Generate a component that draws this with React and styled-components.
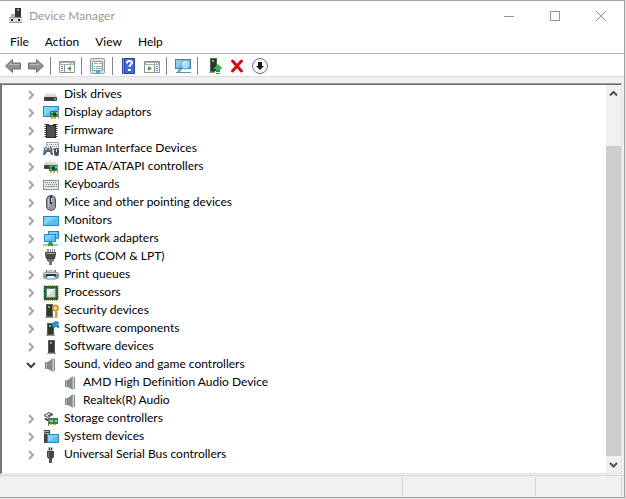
import React, { useState } from "react";
import styled, { createGlobalStyle } from "styled-components";

const GlobalStyle = createGlobalStyle`
  * { box-sizing: border-box; }
  body { margin: 0; background: #e4e4e4; }
  button { font: inherit; color: inherit; background: none; border: 0; padding: 0; }
  ul { list-style: none; margin: 0; padding: 0; }
`;

const Window = styled.div`
  display: flex;
  flex-direction: column;
  height: calc(100vh - 1px);
  min-height: 240px;
  margin-right: 1px;
  border: solid #a3a3a3;
  border-width: 1px 1px 1px 0;
  background: #fff;
  color: #000;
  font: 12px/16px Lato, "Open Sans", sans-serif;
  font-variant-ligatures: none;
`;

const TitleBar = styled.header`
  display: flex;
  align-items: center;
  flex: none;
  height: 29px;
  padding-left: 8px;
  gap: 5px;
  color: #999;
`;

const Title = styled.h1`
  flex: 1;
  margin: 0;
  font-size: 12px;
  font-weight: 400;
`;

const CaptionButton = styled.button`
  display: grid;
  place-items: center;
  width: 46px;
  height: 29px;
`;

const CaptionGroup = styled.div`
  display: flex;
`;

const MenuBar = styled.nav`
  display: flex;
  flex: none;
  height: 24px;
  padding: 0 2px;
  border-bottom: 1px solid #b2b4bb;
`;

const MenuItem = styled.button`
  padding: 0 8px;
`;

const Toolbar = styled.div`
  display: flex;
  align-items: center;
  flex: none;
  height: 23px;
  padding-left: 2px;
  border-bottom: 1px solid #dcdcdc;
`;

const ToolButton = styled.button`
  display: grid;
  align-content: center;
  width: 23px;
  height: 22px;
  padding: 2px 0 0 3px;
`;

const ToolSeparator = styled.span`
  width: 1px;
  height: 18px;
  margin: 2px 5px 0 2px;
  background: #858585;
`;

const Body = styled.main`
  display: flex;
  flex: 1;
  min-height: 0;
  padding: 6px 2px 1px 0;
  background: #f0f0f0;
`;

const Pane = styled.section`
  display: flex;
  flex: 1;
  min-width: 0;
  border: 1px solid #a0a0a0;
  border-right-color: #e3e3e3;
  border-bottom-color: #e3e3e3;
  border-left: 2px solid #777;
  background: #fff;
  box-shadow: inset 0 1px #696969;
`;

const Tree = styled.ul`
  flex: 1;
  min-width: 0;
  overflow: hidden;
  && { padding: 2px 0 0 21px; }
`;

const Row = styled.div`
  display: flex;
  align-items: center;
  height: 18px;
  padding-left: ${(p) => (p.$child ? "40px" : "0")};
`;

const Expander = styled.button`
  display: grid;
  place-items: center;
  width: 16px;
  height: 18px;
  margin-right: 4px;
`;

const Label = styled.span`
  align-self: flex-start;
  margin-left: 5px;
  white-space: nowrap;
`;

const ChildLabel = styled(Label)`
  margin-left: 4px;
`;

const ScrollBar = styled.div`
  display: flex;
  flex-direction: column;
  width: 15px;
  margin-top: 1px;
  background: #f0f0f0;
`;

const ScrollButton = styled.button`
  display: grid;
  place-items: center;
  flex: none;
  height: 17px;
`;

const TrackSpace = styled.div`
  flex: 44;
`;

const Thumb = styled.div`
  flex: 310;
  background: #cdcdcd;
`;

const StatusBar = styled.footer`
  display: flex;
  flex: none;
  height: 22px;
  padding: 1px 2px 1px 0;
  border-top: 1px solid #d5d5d5;
  background: #f0f0f0;
`;

const StatusCell = styled.div`
  flex: ${(p) => p.$grow};
  border-right: 1px solid #d4d4d4;
`;

const Svg = styled.svg`
  display: block;
  flex: none;
`;

const Icon = ({ size = 16, children }) => (
  <Svg width={size} height={size} viewBox={`0 0 ${size} ${size}`} aria-hidden="true">
    {children}
  </Svg>
);

const Monitor = ({ x = 0, y = 2, w = 16, h = 11 }) => (
  <g>
    <rect x={x} y={y} width={w} height={h} fill="#2b88bd" />
    <rect x={x + 1} y={y + 1} width={w - 2} height={h - 2} fill="#57bdf5" />
    <path d={`M${x + 1} ${y + 1}h${w - 2}L${x + 1} ${y + h - 1}z`} fill="#7ed2ff" />
  </g>
);

const Board = ({ x, y }) => (
  <g>
    <rect x={x} y={y} width="9" height="6" fill="#2a8058" />
    <path d={`M${x + 1} ${y + 1}h2v1h-2zM${x + 6} ${y + 1}h2v2h-2zM${x + 1} ${y + 4}h2v1h-2z`} fill="#75c596" />
    <rect x={x + 3} y={y + 2} width="3" height="3" fill="#174a33" />
    <path d={`M${x + 1} ${y + 6}h2v2h-2zm3 0h2v2h-2z`} fill="#f2a51e" />
    <rect x={x + 8} y={y - 1} width="1" height="9" fill="#9aa39e" />
  </g>
);

const Tower = ({ x = 4, y = 1, h = 14 }) => (
  <g>
    <rect x={x} y={y} width="7" height={h} fill="#5a5a5a" />
    <rect x={x + 1} y={y + 1} width="5" height={h - 3} fill="#343434" />
    <rect x={x + 2} y={y + 2} width="2" height="2" fill="#20ef31" />
    <rect x={x - 1} y={y + h - 1} width="9" height="1" fill="#999" />
  </g>
);

const Disk = ({ y = 6 }) => (
  <g>
    <path d={`M3 ${y}h9l2 4H1z`} fill="#d3d5d6" />
    <path d={`M3 ${y}h9l1 2H2z`} fill="#e6e7e7" />
    <rect x="1" y={y + 4} width="13" height="4" rx="1" fill="#3c3e3f" />
    <rect x="11" y={y + 5} width="2" height="2" fill="#21d542" />
  </g>
);

const Speaker = () => (
  <g>
    <path d="M2 5h3v7H2z" fill="#7b848b" />
    <path d="M3 5h1v7H3z" fill="#b6bcc1" />
    <path d="M5 5 10 1v14l-5-3z" fill="#a4a9ad" />
    <path d="M5 5 9 2v12l-4-2z" fill="#858c91" />
    <path d="M10 1h1v14h-1z" fill="#ced2d5" />
    <path d="M11 2h1v12h-1z" fill="#858b90" />
  </g>
);

const icons = {
  disk: <Disk />,
  display: (
    <>
      <Monitor y={1} h={11} />
      <Board x={7} y={6} />
    </>
  ),
  firmware: (
    <>
      <path d="M2.5 1v14M13.5 1v14" stroke="#333" strokeDasharray="1 1" />
      <path d="M1.5 1v14M14.5 1v14" stroke="#aaa" strokeDasharray="1 1" />
      <path d="M3 1h3v1h4V1h3v14H3z" fill="#2b2b2b" />
      <path d="M4 2h1v1h6V2h1v12H4z" fill="#505050" />
    </>
  ),
  hid: (
    <>
      <path d="M3 1h13v8H3z" fill="#a4acb2" />
      <path d="M4 2h11v6H4z" fill="#eceeef" />
      <path d="M4 3.5h11M5 5.5h10M4 7.5h11" stroke="#8a949c" strokeDasharray="1 1" />
      <path d="M1 7q2-2 3 0h2q2-2 3 0l1 7H8l-1-3H4l-2 3H0z" fill="#4f6b83" />
      <path d="M2 7h2v2H2z" fill="#9fc4e2" />
      <path d="M6 7h2v2H6z" fill="#ef8733" />
      <rect x="11" y="7" width="5" height="8" rx="2" fill="#4c535a" />
      <path d="M13 8h1v3h-1z" fill="#d9dfe3" />
    </>
  ),
  ide: (
    <>
      <Disk y={2} />
      <Board x={6} y={6} />
    </>
  ),
  keyboard: (
    <>
      <rect x="0" y="3" width="16" height="10" fill="#8d9498" />
      <rect x="1" y="4" width="14" height="8" fill="#e4e7e9" />
      <path d="M2 5.5h12M2 9.5h1M13 9.5h1" stroke="#798289" strokeDasharray="1 1" />
      <path d="M3 7.5h11" stroke="#798289" strokeDasharray="1 1" />
      <path d="M4 9.5h8" stroke="#8d969c" />
    </>
  ),
  mouse: (
    <>
      <rect x="3" y="0" width="10" height="16" rx="5" fill="#4b5056" />
      <rect x="4" y="1" width="8" height="14" rx="4" fill="#929ba5" />
      <path d="M5 4h1v8H5z" fill="#c2c8ce" />
      <path d="M7 1h2v8H7z" fill="#30363c" />
      <path d="M8 3h1v4H8z" fill="#b9d5e8" />
    </>
  ),
  monitor: <Monitor y={3} h={10} />,
  network: (
    <>
      <Monitor x={5} y={0} w={11} h={8} />
      <Monitor x={1} y={3} w={12} h={8} />
      <path d="M0 13h15v2H0z" fill="#87d79a" />
      <path d="M6 11h3v1h1v3H5v-3h1z" fill="#21a74c" />
    </>
  ),
  ports: (
    <>
      <path d="M4 0h2v4H4zm3 0h1v4H7zm2 0h1v4H9zm2 0h1v4h-1z" fill="#8d8d8d" />
      <path d="M2 3h11v2l-1 5H3L2 5z" fill="#4a4a4a" />
      <path d="M3 4h9v1H3z" fill="#a5a5a5" />
      <path d="M4 10h7v2L9 13v3H6v-3l-2-1z" fill="#747474" />
    </>
  ),
  printer: (
    <>
      <path d="M3 3h10v3H3z" fill="#6a7075" />
      <path d="M4 3h8v2H4z" fill="#c4c9cd" />
      <rect x="0" y="5" width="16" height="7" rx="2" fill="#929a9f" />
      <path d="M1 6h14v1H1z" fill="#d8dbdd" />
      <path d="M3 7h10v3H3z" fill="#30363a" />
      <path d="M4 9h8l1 4H3z" fill="#8fd0f2" />
      <path d="M5 9h6v2H5z" fill="#e2f5fd" />
      <path d="M13 8h2v1h-2z" fill="#14b84f" />
    </>
  ),
  processor: (
    <>
      <path d="M1 .5h14M1 15.5h14M.5 1v14M15.5 1v14" stroke="#b6a659" strokeDasharray="1 1" />
      <rect x="1" y="1" width="14" height="14" fill="#246347" />
      <rect x="3" y="3" width="10" height="10" fill="#568c70" />
      <rect x="4" y="4" width="8" height="8" fill="#cfd6d2" />
      <path d="M4 4h8l-8 8z" fill="#f1f3f2" />
    </>
  ),
  security: (
    <>
      <Tower x={3} />
      <circle cx="12.5" cy="5" r="2.5" fill="#fff1c4" stroke="#d29a37" strokeWidth="2" />
      <path d="M12 8h2v7h-2zm2 2h1v1h-1zm0 2h1v1h-1z" fill="#d69b32" />
    </>
  ),
  component: (
    <>
      <Tower x={4} y={2} h={13} />
      <path d="M10 1h2V0h2v1h2v2h-1v1h1v3h-2V6h-2v1h-2V5H9V3h1z" fill="#2f8fd4" />
    </>
  ),
  software: <Tower x={5} />,
  speaker: <Speaker />,
  storage: (
    <>
      <path d="M1 4.5 6 1.5l4 2-5 3z" fill="#ddd" stroke="#494949" />
      <path d="M5 5l4-2" stroke="#303030" />
      <path d="M2 7.5l3 2" stroke="#303030" strokeWidth="2" />
      <path d="M6 7h9v6H6z" fill="#2f8450" />
      <path d="M7 9h3v2H7zm5 0h2v2h-2z" fill="#9fdb92" />
      <path d="M7 13h2v1H7zm3 0h3v1h-3z" fill="#edac28" />
      <path d="M5 7h1v8H5z" fill="#777" />
    </>
  ),
  system: (
    <>
      <path d="M1 1h6v13H1z" fill="#404448" />
      <path d="M2 2h4v1H2zm0 2h4v1H2z" fill="#aab2b9" />
      <path d="M1 2h1v2H1z" fill="#29cd48" />
      <Monitor x={4} y={5} w={12} h={9} />
    </>
  ),
  usb: (
    <>
      <path d="M5 0h5v5H5z" fill="#b9b9b9" />
      <path d="M6 1h1v2H6zm2 0h1v2H8z" fill="#333" />
      <path d="M4 4h7v6l-2 2H6l-2-2z" fill="#454545" />
      <path d="M5 5h1v5H5z" fill="#7b7b7b" />
      <path d="M6 12h3v4H6z" fill="#555" />
    </>
  ),
};

const Arrow = ({ flip }) => (
  <Icon>
    <g transform={flip ? "translate(16 0) scale(-1 1)" : undefined}>
      <path d="M.5 8 7.5 1.5V5h8v6h-8v3.5z" fill="#929292" stroke="#6d6d6d" />
      <path d="M3 8 6.5 4.5V6H14v1H5z" fill="#bababa" />
    </g>
  </Icon>
);

const PanelIcon = ({ flip }) => (
  <Icon>
    <path d="M.5 3.5h15v11H.5z" fill="#fff" stroke="#8b929a" />
    <path d="M1 4h14v3H1z" fill="#a7b0b9" />
    <path d="M2 5h8v1H2zm9 0h1v1h-1zm2 0h1v1h-1z" fill="#fff" />
    <path d={flip ? "M10.5 7v7" : "M5.5 7v7"} stroke="#8b929a" />
    <path d={flip ? "M12 8.5h2m-2 2h2m-2 2h2" : "M2 8.5h2m-2 2h2m-2 2h2"} stroke="#3188c8" />
    <path d={flip ? "M4 8v5l4-2.5z" : "M12 8v5l-4-2.5z"} fill="#45ad2d" />
  </Icon>
);

const toolbar = [
  ["Back", <Arrow />],
  ["Forward", <Arrow flip />],
  null,
  ["Show console tree", <PanelIcon />],
  null,
  [
    "Properties",
    <Icon>
      <rect x="0.5" y="0.5" width="14" height="15" rx="1" fill="#dfe2e5" stroke="#969ba0" />
      <path d="M2.5 3.5h10v9h-10z" fill="#fff" stroke="#8d969e" />
      <path d="M4 5.5h4m1 0h3M6 8.5h6M6 10.5h6" stroke="#9ba6af" />
      <path d="M4 8h1v1H4zm0 2h1v1H4zM6 13h4v2H6z" fill="#28b4e8" />
    </Icon>,
  ],
  null,
  [
    "Help",
    <Icon>
      <path d="M1 0h13v16H1z" fill="#244ba6" />
      <path d="M4 1h9v14H4z" fill="#4169d0" />
      <path d="M2 0h1v16H2z" fill="#7593dc" />
      <path d="M6 5.5V4.5q0-1.500 2.500-1.500t2.500 1.500c0 2-2.500 2-2.500 4.500" fill="none" stroke="#fff" strokeWidth="2" />
      <path d="M7 11h3v2H7z" fill="#fff" />
    </Icon>,
  ],
  ["Show action pane", <PanelIcon flip />],
  null,
  [
    "Scan for hardware changes",
    <Icon>
      <Monitor y={1} h={10} />
      <path d="M1 14h15v1H1z" fill="#5a93b2" />
      <path d="M7.500 9.500 3 14" stroke="#7b8a93" strokeWidth="2" />
      <circle cx="10.500" cy="6.500" r="4.500" fill="#a9dcf7" stroke="#7c96a5" />
      <path d="M8 6.500q0-2.500 2.500-2.500" fill="none" stroke="#effaff" />
    </Icon>,
  ],
  null,
  [
    "Update driver",
    <Icon>
      <Tower x={4} y={0} h={15} />
      <path d="M12 6 7 11h3v2h4v-2h2v-1z" fill="#29b94d" />
      <path d="M10 12h4v1h-4z" fill="#14a236" />
      <path d="M9 13h6v3H9z" fill="#fff" />
      <path d="M10 13h4v1h-4zm0 2h4v1h-4z" fill="#14a236" />
    </Icon>,
  ],
  [
    "Uninstall device",
    <Icon>
      <path d="m3.500 3 9 10M12.500 3l-9 10" stroke="#de0714" strokeWidth="3" strokeLinecap="round" />
    </Icon>,
  ],
  [
    "Disable device",
    <Icon>
      <circle cx="8" cy="8" r="7.500" fill="#f8f8f8" stroke="#737373" />
      <path d="M6 4h4v4h2l-4 4-4-4h2z" fill="#181818" />
    </Icon>,
  ],
];

const devices = [
  ["Disk drives", "disk"],
  ["Display adaptors", "display"],
  ["Firmware", "firmware"],
  ["Human Interface Devices", "hid"],
  ["IDE ATA/ATAPI controllers", "ide"],
  ["Keyboards", "keyboard"],
  ["Mice and other pointing devices", "mouse"],
  ["Monitors", "monitor"],
  ["Network adapters", "network"],
  ["Ports (COM & LPT)", "ports"],
  ["Print queues", "printer"],
  ["Processors", "processor"],
  ["Security devices", "security"],
  ["Software components", "component"],
  ["Software devices", "software"],
  ["Sound, video and game controllers", "speaker", ["AMD High Definition Audio Device", "Realtek(R) Audio"]],
  ["Storage controllers", "storage"],
  ["System devices", "system"],
  ["Universal Serial Bus controllers", "usb"],
];

function DeviceNode({ name, icon, items }) {
  const [open, setOpen] = useState(Boolean(items));
  return (
    <li>
      <Row>
        <Expander aria-label={name} aria-expanded={open} onClick={() => setOpen(!open)}>
          <Icon>
            <path
              d={open ? "m4 6 4 4 4-4" : "m6 4 4 4-4 4"}
              fill="none"
              stroke={open ? "#404040" : "#a6a6a6"}
              strokeWidth="2"
            />
          </Icon>
        </Expander>
        <Icon>{icons[icon]}</Icon>
        <Label>{name}</Label>
      </Row>
      {open && items && (
        <ul>
          {items.map((item) => (
            <li key={item}>
              <Row $child>
                <Icon>{icons.speaker}</Icon>
                <ChildLabel>{item}</ChildLabel>
              </Row>
            </li>
          ))}
        </ul>
      )}
    </li>
  );
}

export default function App() {
  return (
    <>
      <GlobalStyle />
      <Window>
        <TitleBar>
          <Icon>
            <path d="M7 0h6v9H7z" fill="#333" />
            <path d="M9 1h2v2H9z" fill="#39bd5b" />
            <path d="M3 6h4v3H3z" fill="#b4b4b4" />
            <path d="M1 9h13v6H1z" fill="#d9dadb" />
            <path d="M1 9h13v1H1zm0 5h13v1H1z" fill="#999" />
            <path d="M3 11h2v2H3zm7 0h2v2h-2z" fill="#222" />
          </Icon>
          <Title>Device Manager</Title>
          <CaptionGroup>
            <CaptionButton aria-label="Minimize">
              <Icon size={12}><path d="M1 6.500h10" stroke="#929292" /></Icon>
            </CaptionButton>
            <CaptionButton aria-label="Maximize">
              <Icon size={12}><path d="M1.500 1.500h9v9h-9z" fill="none" stroke="#929292" /></Icon>
            </CaptionButton>
            <CaptionButton aria-label="Close">
              <Icon size={12}><path d="m1 1 10 10M11 1 1 11" stroke="#929292" /></Icon>
            </CaptionButton>
          </CaptionGroup>
        </TitleBar>
        <MenuBar>
          {["File", "Action", "View", "Help"].map((item) => (
            <MenuItem key={item}>{item}</MenuItem>
          ))}
        </MenuBar>
        <Toolbar>
          {toolbar.map((tool, i) =>
            tool ? (
              <ToolButton key={i} aria-label={tool[0]}>{tool[1]}</ToolButton>
            ) : (
              <ToolSeparator key={i} />
            )
          )}
        </Toolbar>
        <Body>
          <Pane>
            <Tree>
              {devices.map(([name, icon, items]) => (
                <DeviceNode key={name} name={name} icon={icon} items={items} />
              ))}
            </Tree>
            <ScrollBar>
              <ScrollButton aria-label="Scroll up">
                <Icon size={9}><path d="M1 6.500 4.500 3 8 6.500" fill="none" stroke="#505050" strokeWidth="2" /></Icon>
              </ScrollButton>
              <TrackSpace />
              <Thumb />
              <ScrollButton aria-label="Scroll down">
                <Icon size={9}><path d="M1 3 4.500 6.500 8 3" fill="none" stroke="#505050" strokeWidth="2" /></Icon>
              </ScrollButton>
            </ScrollBar>
          </Pane>
        </Body>
        <StatusBar>
          <StatusCell $grow={404} />
          <StatusCell $grow={133} />
          <StatusCell $grow={85} />
        </StatusBar>
      </Window>
    </>
  );
}
